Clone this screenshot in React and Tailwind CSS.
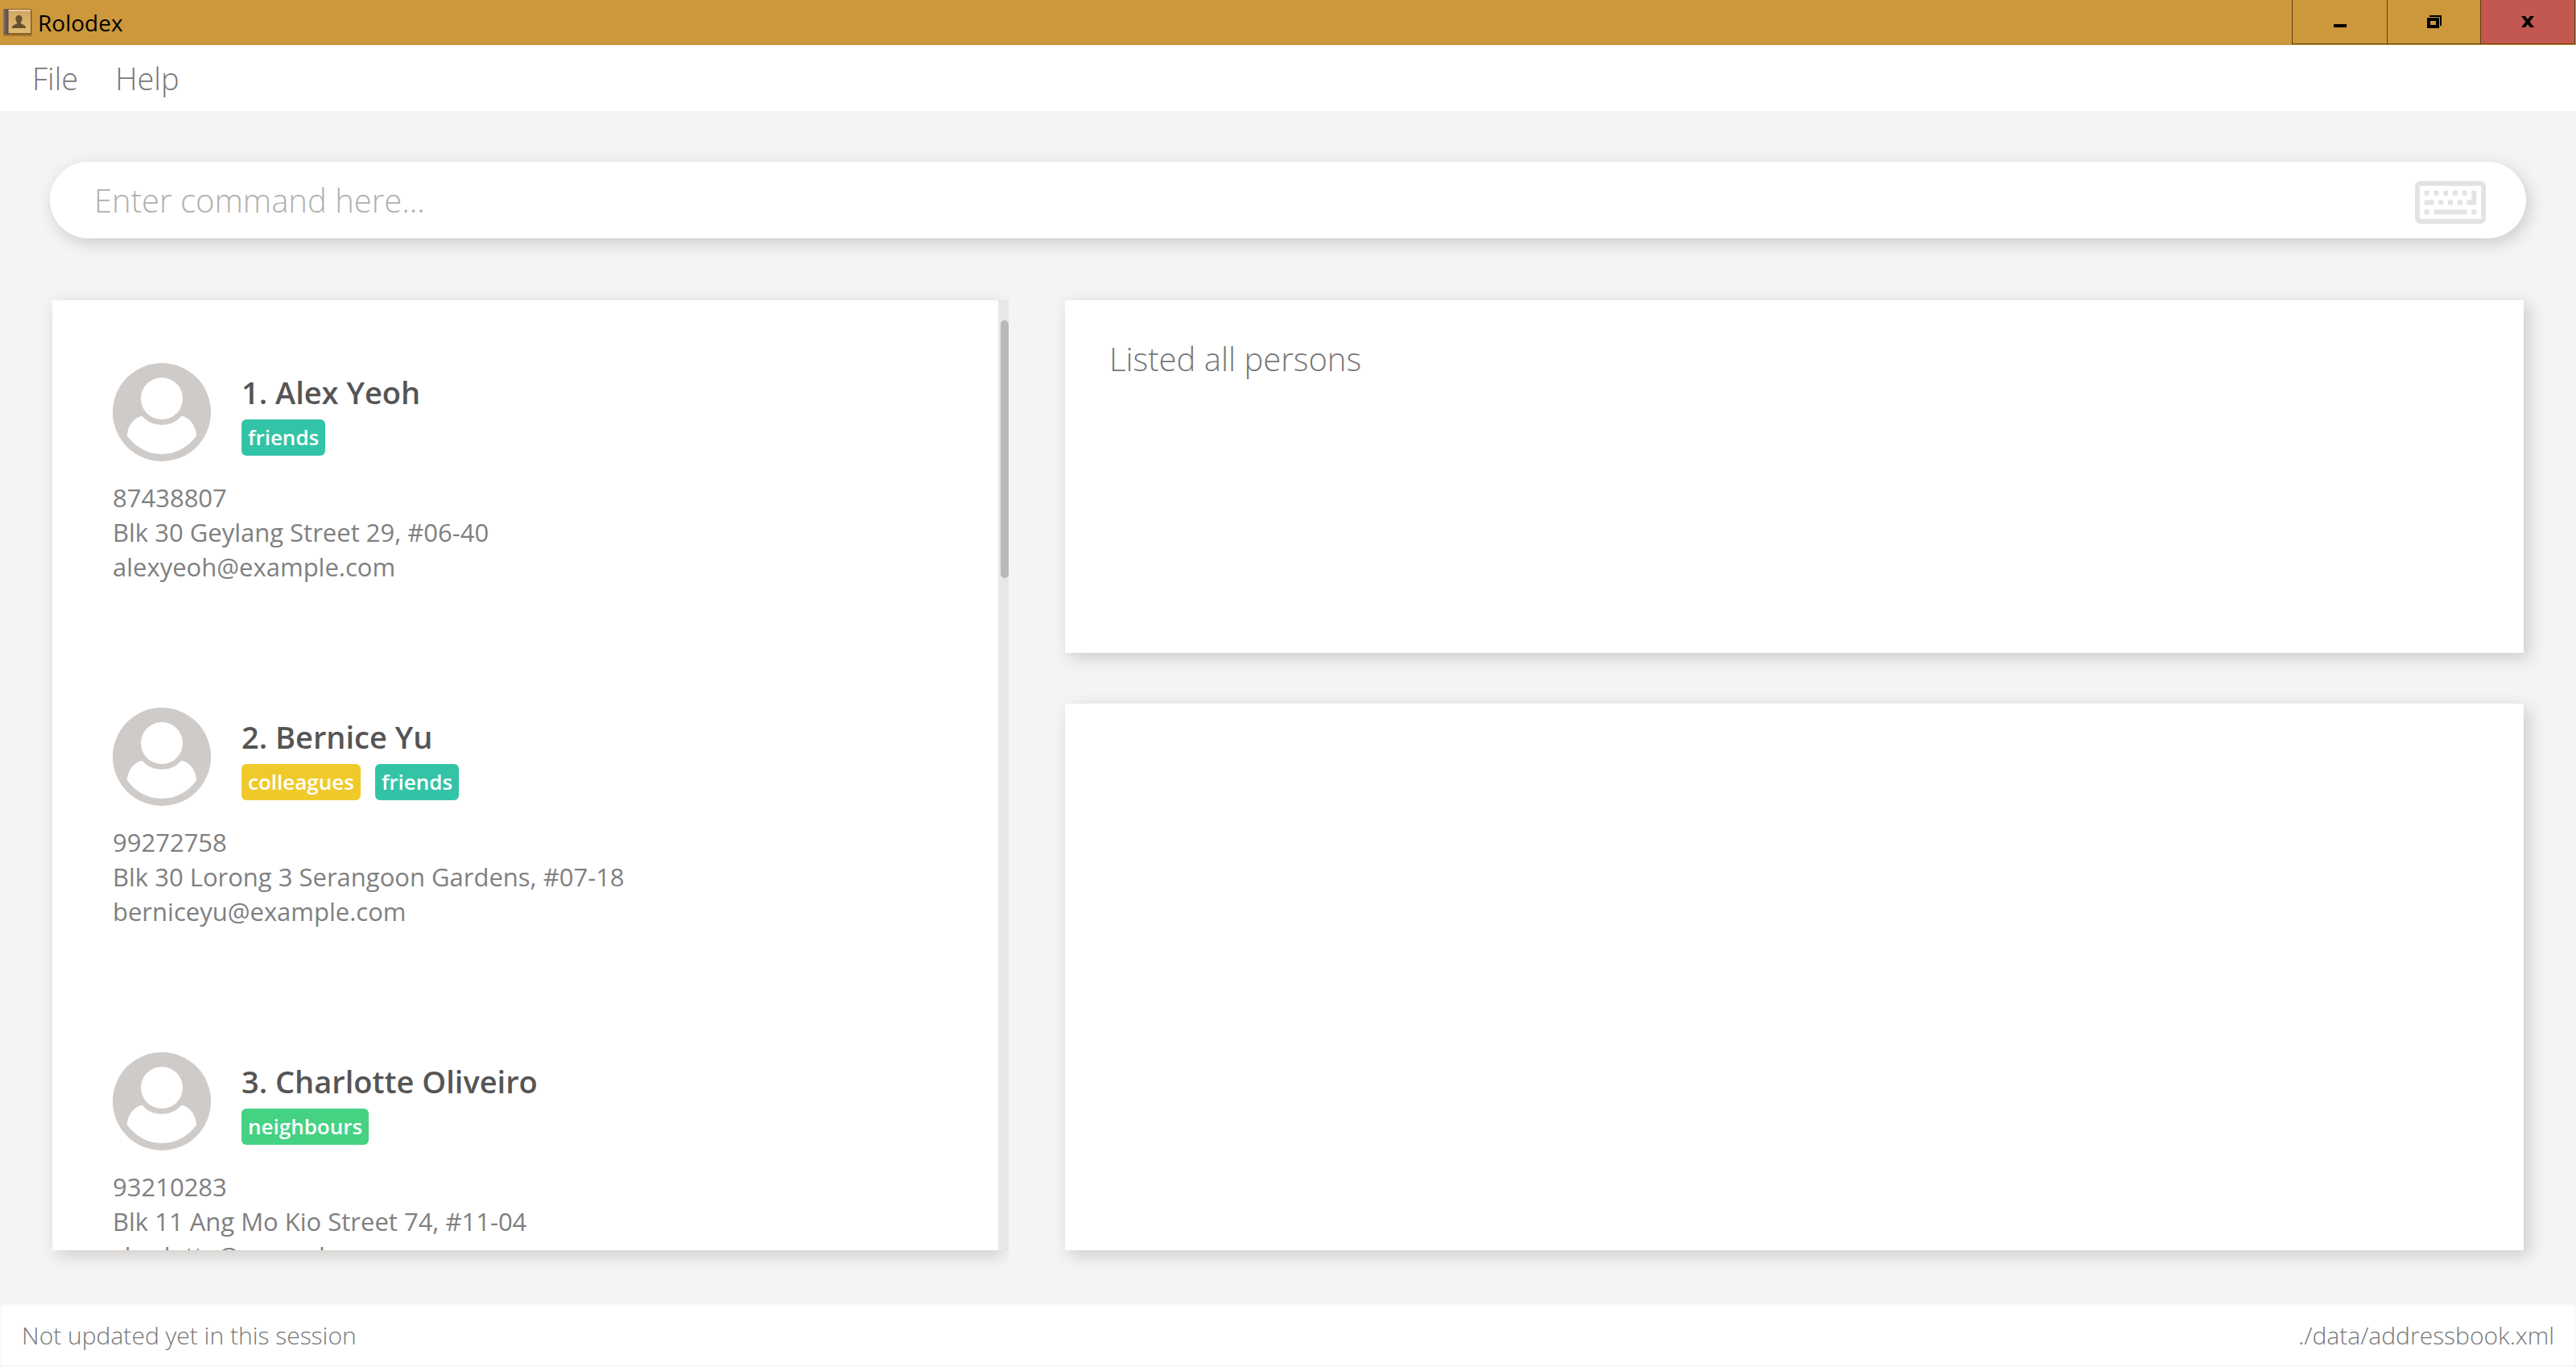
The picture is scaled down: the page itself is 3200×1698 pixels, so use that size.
import React from "react";

const persons = [
  {
    name: "1. Alex Yeoh",
    tags: ["friends"],
    phone: "87438807",
    address: "Blk 30 Geylang Street 29, #06-40",
    email: "alexyeoh@example.com",
  },
  {
    name: "2. Bernice Yu",
    tags: ["colleagues", "friends"],
    phone: "99272758",
    address: "Blk 30 Lorong 3 Serangoon Gardens, #07-18",
    email: "berniceyu@example.com",
  },
  {
    name: "3. Charlotte Oliveiro",
    tags: ["neighbours"],
    phone: "93210283",
    address: "Blk 11 Ang Mo Kio Street 74, #11-04",
    email: "charlotte@example.com",
  },
];

const tagColors = {
  friends: "bg-[#33c4a7]",
  colleagues: "bg-[#f0ca2a]",
  neighbours: "bg-[#45d283]",
};

function BookIcon() {
  return (
    <svg viewBox="0 0 38 36" className="h-9 w-[38px]" aria-hidden="true">
      <defs>
        <linearGradient id="cover" x1="0" y1="0" x2="0" y2="1">
          <stop offset="0" stopColor="#cfa763" />
          <stop offset="1" stopColor="#e2bb72" />
        </linearGradient>
        <linearGradient id="spine" x1="0" y1="0" x2="1" y2="0">
          <stop offset="0" stopColor="#8b7467" />
          <stop offset="0.5" stopColor="#6b5a58" />
          <stop offset="1" stopColor="#574a4d" />
        </linearGradient>
      </defs>
      <rect x="1" y="3" width="36" height="32" rx="1" fill="#8a6222" opacity="0.55" />
      <rect x="1" y="1" width="35" height="32" rx="1" fill="#84602a" />
      <rect x="2" y="2" width="33" height="29" fill="url(#cover)" />
      <rect x="2" y="2" width="33" height="1.5" fill="#f3dcae" />
      <rect x="1" y="1.5" width="6.500" height="31" fill="url(#spine)" />
      <path
        d="M20.500 9c2.800 0 4.200 1.900 4.100 4.600-.1 2-.9 3.400-1.700 4.300v1.500c2.800 1 6.100 1.600 6.300 5.600H11.800c.2-4 3.500-4.600 6.300-5.600v-1.500c-.8-.9-1.600-2.300-1.700-4.300C16.300 10.900 17.700 9 20.500 9z"
        fill="#68502f"
      />
    </svg>
  );
}

function KeyboardIcon() {
  return (
    <svg viewBox="0 0 15 9" className="h-[53px] w-[88px] shrink-0" fill="#e4e2e3" aria-hidden="true">
      <rect x="0.5" y="0.5" width="14" height="8" rx="0.6" fill="none" stroke="#e4e2e3" />
      <path d="M2 2h1v1H2zM4 2h1v1H4zM6 2h1v1H6zM8 2h1v1H8zM10 2h1v1h-1zM12 2h1v3h-2V4h1z" />
      <path d="M2 4h2v1H2zM5 4h1v1H5zM7 4h1v1H7zM9 4h1v1H9z" />
      <path d="M2 6h1v1H2zM4 6h7v1H4zM12 6h1v1h-1z" />
    </svg>
  );
}

function Avatar() {
  return (
    <svg viewBox="0 0 122 122" className="size-[122px] shrink-0" aria-hidden="true">
      <circle cx="61" cy="61" r="61" fill="#cfcbc9" />
      <circle cx="61" cy="44" r="26" fill="#fff" />
      <path
        d="M36.500 65.700C25 68 18 80 18 90.500C28 104 43 113 61 113S94 104 104 90.500C104 80 97 68 85.500 65.700C79 73 71 76.700 61 76.700S43 73 36.500 65.700Z"
        fill="#fff"
      />
    </svg>
  );
}

function PersonCard({ person }) {
  return (
    <li className="h-[428px] shrink-0 px-[75px] pt-[78px]">
      <div className="flex gap-[38px]">
        <Avatar />
        <div className="pt-2.5">
          <h2 className="text-[38px]/[52px] font-semibold text-[#555]">{person.name}</h2>
          <div className="mt-2 flex gap-[18px]">
            {person.tags.map((tag) => (
              <span
                key={tag}
                className={`rounded-md px-2 text-[26px]/[45px] font-semibold text-white ${tagColors[tag]}`}
              >
                {tag}
              </span>
            ))}
          </div>
        </div>
      </div>
      <div className="mt-6 text-[31px]/[43px] text-[#808080]">
        <p>{person.phone}</p>
        <p>{person.address}</p>
        <p>{person.email}</p>
      </div>
    </li>
  );
}

function TitleBar() {
  return (
    <header className="flex h-14 shrink-0 items-start justify-between bg-[#cc983b]">
      <div className="flex items-center gap-1.5 self-center pl-[3px]">
        <BookIcon />
        <h1 className="text-[28px]/[40px] text-black">Rolodex</h1>
      </div>
      <div className="mr-px flex h-[55px] border-b border-l border-[#5e4010]">
        <button type="button" aria-label="Minimize" className="flex w-[118px] items-center justify-center border-r border-[#5e4010]">
          <svg viewBox="0 0 16 16" className="size-4" aria-hidden="true">
            <path d="M0 11h16v4H0z" />
          </svg>
        </button>
        <button type="button" aria-label="Restore" className="flex w-[116px] items-center justify-center border-r border-[#5e4010]">
          <svg viewBox="0 0 18 16" className="h-4 w-[18px]" aria-hidden="true">
            <path d="M3 0h15v13h-2V2H3z" />
            <path fillRule="evenodd" d="M0 3h15v13H0zM4 7v5h7V7z" />
          </svg>
        </button>
        <button type="button" aria-label="Close" className="flex w-[117px] items-center justify-center border-r border-[#5e4010] bg-[#c2584f]">
          <svg viewBox="0 0 16 14" className="h-3.5 w-4" aria-hidden="true">
            <path d="M0 0h5l3 4 3-4h5l-5.500 7L16 14h-5l-3-4-3 4H0l5.500-7z" />
          </svg>
        </button>
      </div>
    </header>
  );
}

export default function App() {
  return (
    <div className="flex h-screen flex-col overflow-hidden bg-[#f5f4f2] font-['Open_Sans','Noto_Sans',sans-serif]">
      <TitleBar />
      <nav className="flex h-[82px] shrink-0 items-center gap-[46px] bg-white px-10 text-[38px]/[54px] font-light text-[#777]">
        <button type="button">File</button>
        <button type="button">Help</button>
      </nav>

      <main className="flex min-h-0 flex-1 flex-col px-[65px] pb-[67px] pt-[63px]">
        <div className="-mx-[3px] flex h-[95px] shrink-0 items-start rounded-full bg-white pl-[55px] pr-[50px] shadow-[4px_6px_20px_rgba(0,0,0,0.17)]">
          <input
            type="text"
            aria-label="Command"
            placeholder="Enter command here..."
            className="mt-5 h-14 min-w-0 flex-1 bg-transparent text-[40px]/[56px] font-light text-[#777] outline-none placeholder:text-[#b0b0b0]"
          />
          <span className="mt-6">
            <KeyboardIcon />
          </span>
        </div>

        <div className="mt-[77px] grid min-h-0 flex-1 grid-cols-[1188fr_1812fr] gap-[70px]">
          <section aria-label="Persons" className="flex min-h-0 [clip-path:inset(-30px_0_-30px_-30px)]">
            <ul className="flex min-w-0 flex-1 flex-col overflow-hidden bg-white shadow-[6px_6px_20px_rgba(0,0,0,0.17)]">
              {persons.map((person) => (
                <PersonCard key={person.name} person={person} />
              ))}
            </ul>
            <div className="relative w-[13px] shrink-0 bg-[#e8e8e6] pl-[3px] pt-[25px]">
              <div className="h-80 rounded-full bg-[#b9b7b8]" />
            </div>
          </section>

          <div className="flex min-h-0 flex-col gap-[63px]">
            <section className="h-[438px] shrink-0 bg-white px-[55px] pt-[45px] shadow-[6px_6px_20px_rgba(0,0,0,0.17)]">
              <p className="text-[40px]/[56px] font-light text-[#777]">Listed all persons</p>
            </section>
            <section aria-label="Details" className="flex-1 bg-white shadow-[6px_6px_20px_rgba(0,0,0,0.17)]" />
          </div>
        </div>
      </main>

      <footer className="flex h-[78px] shrink-0 items-center justify-between border-2 border-[#f9f9f9] bg-white px-[25px] text-[30px]/[42px] font-light text-[#777]">
        <span>Not updated yet in this session</span>
        <span>./data/addressbook.xml</span>
      </footer>
    </div>
  );
}
